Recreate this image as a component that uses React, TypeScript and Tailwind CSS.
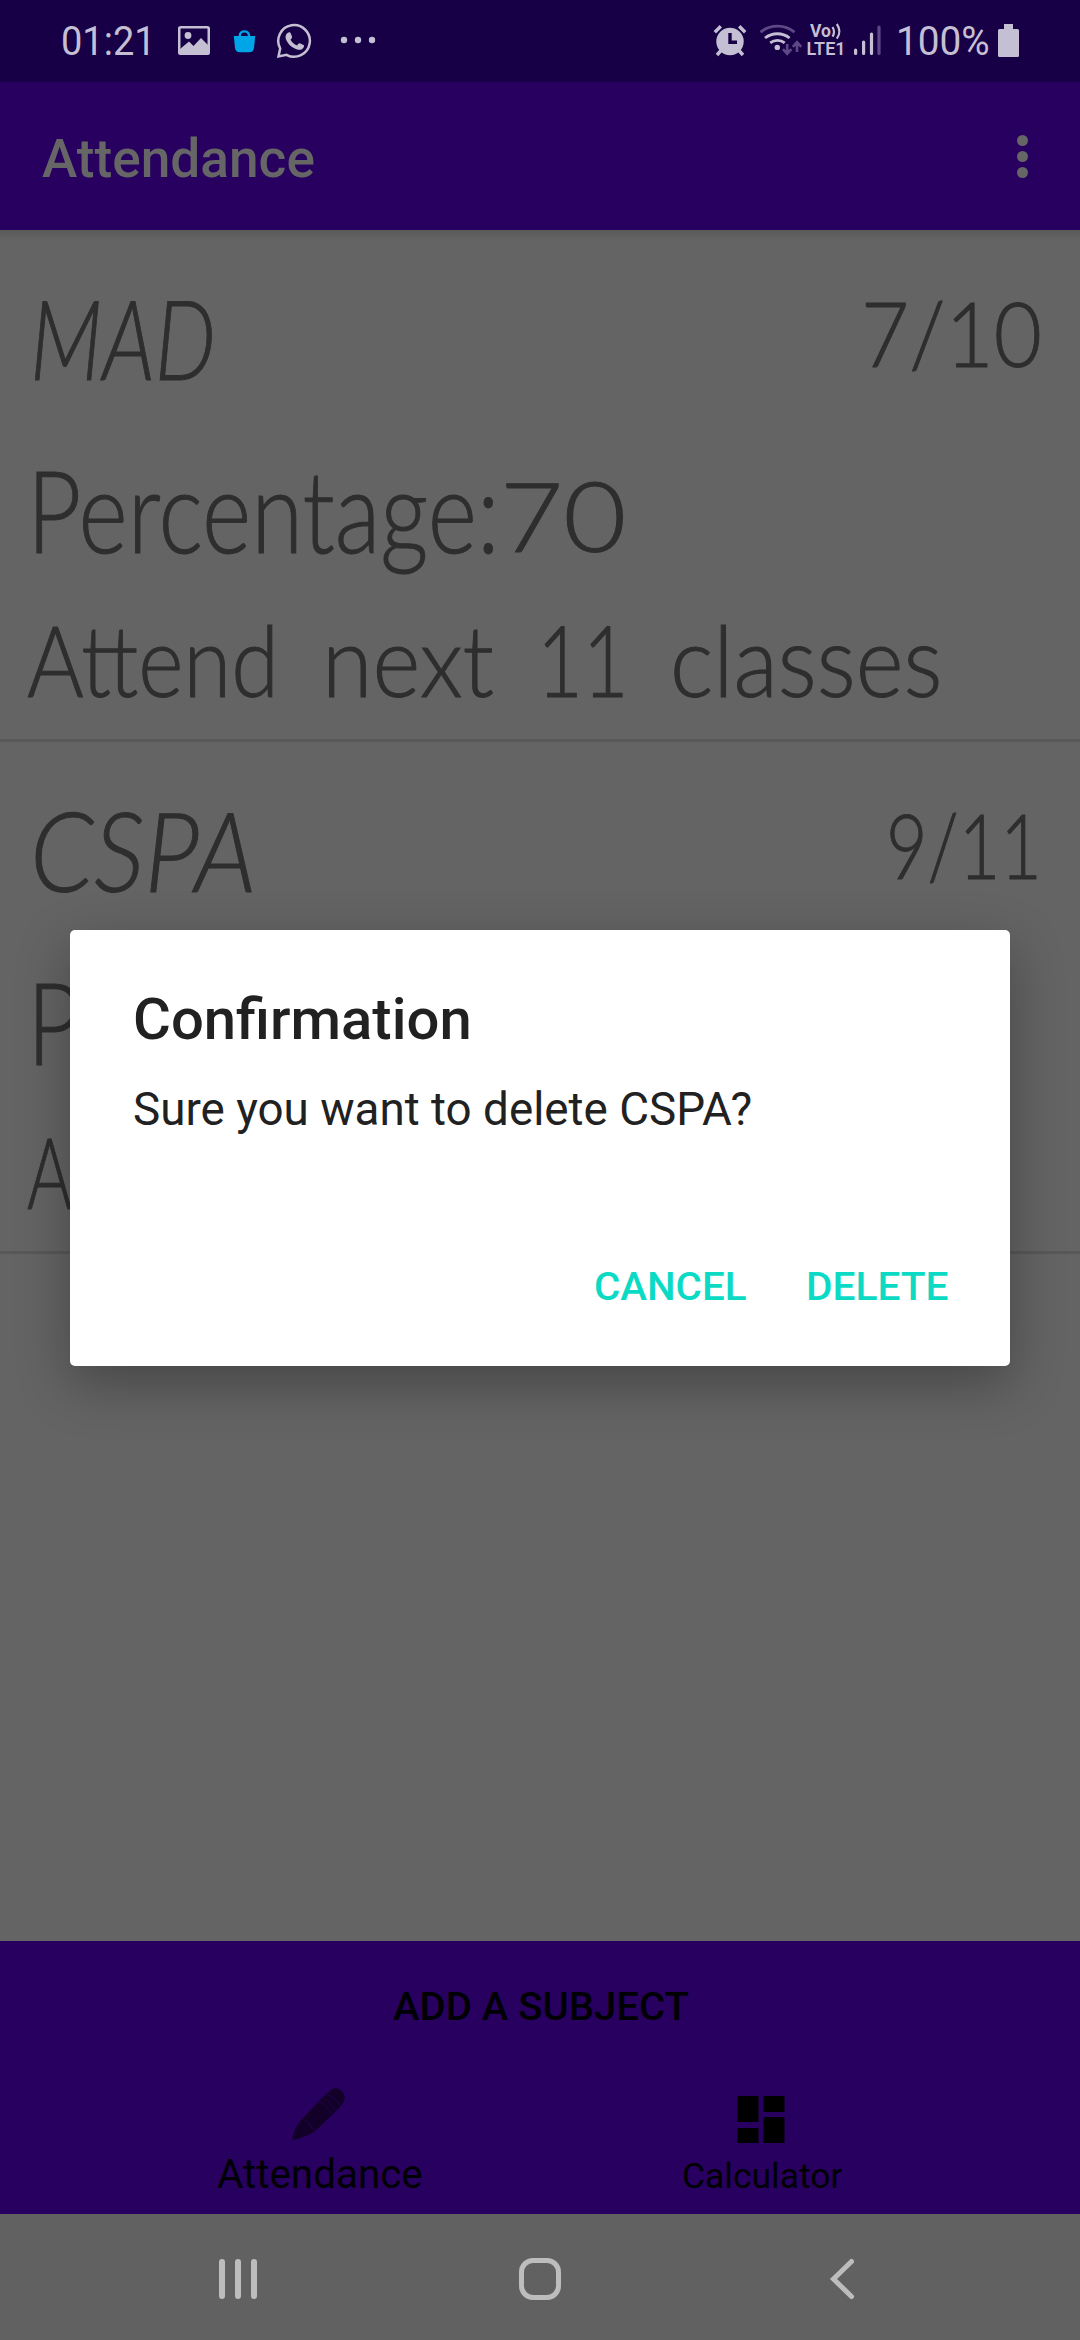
import { useLayoutEffect, useRef, useState } from "react";
import type { ReactNode } from "react";

/* Text stretched horizontally so that it fills an exact width. */
function Fit({ width, className = "", children }: { width: number; className?: string; children: ReactNode }) {
  const ref = useRef<HTMLSpanElement>(null);
  const [scale, setScale] = useState(1);
  useLayoutEffect(() => {
    if (ref.current) setScale(width / ref.current.offsetWidth);
  }, [width]);
  return (
    <span className="block shrink-0 whitespace-nowrap" style={{ width }}>
      <span ref={ref} className={`inline-block origin-left ${className}`} style={{ transform: `scaleX(${scale})` }}>
        {children}
      </span>
    </span>
  );
}

/* A status bar glyph, drawn in the bar's own coordinates. */
function Glyph({ x, w, className = "", children }: { x: number; w: number; className?: string; children: ReactNode }) {
  return (
    <svg width={w} height={82} viewBox={`${x} 0 ${w} 82`} className={`shrink-0 ${className}`} fill="none">
      {children}
    </svg>
  );
}

const C = "#c5bfd3";
const D = "#5f4886";

function StatusBar() {
  return (
    <div className="flex h-[82px] items-center bg-[#170045] pl-[61px] text-[#c5bfd3]">
      <Fit width={95} className="pt-[2px] text-[40px] leading-[82px]">01:21</Fit>
      <Glyph x={178} w={32} className="ml-[22px]">
        <rect x="179.2" y="27.2" width="29.6" height="26.6" rx="1.5" stroke={C} strokeWidth="2.6" />
        <circle cx="188" cy="35.5" r="3.4" fill={C} />
        <path d="M180 49 189 41.500 193.500 46 201 38 208 45V54H180Z" fill={C} />
      </Glyph>
      <Glyph x={233} w={23} className="ml-[23px]">
        <path d="M239.800 36.500v-1c0-5.500 9.200-5.500 9.200 0v1" stroke="#00a5e8" strokeWidth="2.4" />
        <path d="M233.800 36h21.400l-1.200 12c-.5 3-2 4.300-4.800 4.300h-9.400c-2.800 0-4.300-1.300-4.800-4.300Z" fill="#00a5e8" />
      </Glyph>
      <Glyph x={276} w={36} className="ml-[20px]">
        <path d="M278.500 56.500 280.200 48.500A15.800 15.800 0 1 1 286.500 54.800Z" stroke={C} strokeWidth="2.5" strokeLinejoin="miter" />
        <path d="M287.500 33c1.600-1.300 2.800-.8 3.300.5l1.200 3c.3 1-.2 1.700-1.500 3.200 1.700 3 3.700 4.700 6.500 5.700 1.500-1.800 2.100-2.600 3.300-2l3.200 1.600c.8.500.7 1 .2 2.300-.8 2-3.500 3-5.700 2.400-5.800-1.600-10.300-5.700-12.200-11-.7-2.300.2-4.400 1.700-5.700Z" fill={C} />
      </Glyph>
      <Glyph x={340} w={36} className="ml-[28px]">
        <circle cx="344" cy="40" r="3.200" fill={C} />
        <circle cx="358" cy="40" r="3.200" fill={C} />
        <circle cx="372" cy="40" r="3.200" fill={C} />
      </Glyph>
      <Glyph x={712} w={36} className="ml-auto">
        <circle cx="730" cy="41.500" r="13.700" fill={C} />
        <path d="m714.800 32.300 6-6M745.200 32.300l-6-6" stroke={C} strokeWidth="3.400" />
        <path d="m721.500 50-4.500 5M738.500 50l4.500 5" stroke={C} strokeWidth="3.400" />
        <path d="M730 33v9.300h7" stroke="#170045" strokeWidth="3.400" />
      </Glyph>
      <Glyph x={758} w={45} className="ml-[10px]">
        <path d="M760.500 32.200a27 27 0 0 1 34 0" stroke={D} strokeWidth="2.800" />
        <path d="M765 38a20 20 0 0 1 24.600 0" stroke={C} strokeWidth="2.800" />
        <path d="M770.200 42.800a12 12 0 0 1 14.500 0" stroke={C} strokeWidth="2.800" />
        <circle cx="777.300" cy="47.400" r="2.700" fill={C} />
        <path d="M787.200 44v9M783 49.200l4.200 4.600 4.200-4.600M797 52v-9M792.800 46.800l4.200-4.600 4.200 4.600" stroke={D} strokeWidth="2.600" />
      </Glyph>
      <Glyph x={806} w={40} className="ml-[3px]">
        <text x="810" y="37" textLength="21" lengthAdjust="spacingAndGlyphs" fontSize="18" fontWeight="700" fill={C}>Vo</text>
        <path d="M832.500 27q3 5 0 9.600M836.800 24q5.200 7.500 0 14.600" stroke={C} strokeWidth="2.200" />
        <text x="806.500" y="55" textLength="39" lengthAdjust="spacingAndGlyphs" fontSize="18.500" fontWeight="600" fill={C}>LTE1</text>
      </Glyph>
      <Glyph x={853} w={29} className="ml-[7px]">
        <g strokeWidth="3.200" strokeLinecap="round">
          <path d="M855.600 50v3.500M863.600 42v11.500M871.500 34v19.500" stroke={C} />
          <path d="M879 27v26.500" stroke={D} />
        </g>
      </Glyph>
      <div className="ml-[14px]">
        <Fit width={94} className="pt-[2px] text-[40px] leading-[82px]">100%</Fit>
      </div>
      <Glyph x={998} w={21} className="mr-[61px] ml-[8px]">
        <path d="M1004 24h9v5h4.500q1.500 0 1.500 1.500v25q0 1.500-1.500 1.500h-18q-1.500 0-1.500-1.500v-25q0-1.500 1.500-1.500h4.500Z" fill={C} />
      </Glyph>
    </div>
  );
}

function AppBar() {
  return (
    <div className="flex h-[148px] items-center justify-between bg-[#28005f] pr-[52px] pl-[42px] text-[#666]">
      <Fit width={273} className="mt-[6px] text-[53px] leading-[70px] font-medium">Attendance</Fit>
      <div className="flex flex-col gap-[5px]">
        <span className="size-[11px] rounded-full bg-[#666]" />
        <span className="size-[11px] rounded-full bg-[#666]" />
        <span className="size-[11px] rounded-full bg-[#666]" />
      </div>
    </div>
  );
}

type Word = { text: string; width: number; gap?: number };

type Subject = { name: Word; score: Word; percent: Word; advice: Word[] };

const subjects: Subject[] = [
  {
    name: { text: "MAD", width: 186 },
    score: { text: "7/10", width: 181 },
    percent: { text: "70", width: 126 },
    advice: [
      { text: "Attend", width: 252 },
      { text: "next", width: 172, gap: 43 },
      { text: "11", width: 92, gap: 43 },
      { text: "classes", width: 272, gap: 41 },
    ],
  },
  {
    name: { text: "CSPA", width: 226 },
    score: { text: "9/11", width: 156 },
    percent: { text: "81", width: 126 },
    advice: [{ text: "A", width: 45 }],
  },
];

function SubjectRow({ s }: { s: Subject }) {
  return (
    <div className="h-[512px] border-b-[3px] border-[#585858] pt-[52px] pr-[38px] pl-[27px] font-['Lato',sans-serif] font-light text-[#2e2e2e] [-webkit-text-stroke:1px_#2e2e2e]">
      <div className="flex h-[110px] items-start justify-between pl-[3px]">
        <Fit width={s.name.width} className="text-[111px] leading-[110px] italic">{s.name.text}</Fit>
        <Fit width={s.score.width} className="text-[91px] leading-[100px]">{s.score.text}</Fit>
      </div>
      <div className="mt-[61px] flex h-[124px]">
        <Fit width={473} className="text-[115px] leading-[110px]">Percentage:</Fit>
        <Fit width={s.percent.width} className="pt-[7px] text-[96px] leading-[110px]">{s.percent.text}</Fit>
      </div>
      <div className="mt-[32px] flex">
        {s.advice.map((w) => (
          <div key={w.text} style={{ marginLeft: w.gap ?? 0 }}>
            <Fit width={w.width} className="text-[98px] leading-[100px]">{w.text}</Fit>
          </div>
        ))}
      </div>
    </div>
  );
}

function BottomBar() {
  return (
    <div className="flex h-[273px] flex-col bg-[#28005f] text-[#000004]">
      <div className="flex justify-center pt-[39px] pl-[2px]">
        <Fit width={296} className="text-[39.500px] leading-[54px] font-medium">ADD A SUBJECT</Fit>
      </div>
      <div className="flex pt-[49px]">
        <div className="ml-[217px] flex w-[206px] flex-col items-center">
          <svg width="60" height="64" viewBox="290 2083 60 64">
            <path d="M292.500 2140q0-4 2-9.500 3-7 7-11L322 2098l9.500-8.500q5-3 9.500 1 4.500 4 3.500 9-1 4-4 7l-10 10-14 13.500q-7 5-12 6.500-7 3-12 3.500Z" fill="#120029" />
            <path d="M305 2120q6 3 8 10M319 2101.500q9 4 12 12M323 2098q9 4 12 12M327 2094.500q10 4 13 12" stroke="#28005f" strokeWidth=".7" fill="none" />
          </svg>
          <Fit width={206} className="pt-px text-[40px] leading-[54px]">Attendance</Fit>
        </div>
        <div className="ml-[258px] flex w-[161px] flex-col items-center">
          <svg width="62" height="64" viewBox="730.500 2083 62 64" fill="#000">
            <path d="M737 2096h21v26h-21ZM763 2096h21v16h-21ZM737 2128h21v15h-21ZM763 2117h21v26h-21Z" />
          </svg>
          <Fit width={160} className="pt-px text-[35px] leading-[58px]">Calculator</Fit>
        </div>
      </div>
    </div>
  );
}

function NavBar() {
  return (
    <div className="flex h-[126px] items-center bg-[#616161] pt-[4px] pl-[218px] text-[#bdbdbd]">
      <div className="flex gap-[10px] pl-px">
        <span className="h-[40px] w-[6px] rounded-full bg-[#bdbdbd]" />
        <span className="h-[40px] w-[6px] rounded-full bg-[#bdbdbd]" />
        <span className="h-[40px] w-[6px] rounded-full bg-[#bdbdbd]" />
      </div>
      <div className="ml-[262px] size-[42px] rounded-[14px] border-[5px] border-[#bdbdbd]" />
      <svg className="ml-[268px]" width="28" height="44" viewBox="0 0 28 44" fill="none">
        <path d="M22.500 4.500 4.500 22l18 17.500" stroke="#bdbdbd" strokeWidth="5" strokeLinecap="round" />
      </svg>
    </div>
  );
}

function ConfirmDialog() {
  return (
    <div className="absolute top-[930px] left-[70px] flex h-[436px] w-[940px] flex-col rounded-[5px] bg-white pl-[63px] text-[#212121] shadow-[0_18px_54px_rgba(0,0,0,0.3)]">
      <div className="pt-[55px]">
        <Fit width={339} className="text-[57px] leading-[70px] font-medium">Confirmation</Fit>
      </div>
      <div className="pt-[24px]">
        <Fit width={619} className="text-[46px] leading-[60px]">Sure you want to delete CSPA?</Fit>
      </div>
      <div className="mt-auto flex justify-end gap-[60px] pr-[61px] pb-[52px] text-[39.500px] leading-[54px] font-medium text-[#0bdac5]">
        <Fit width={152}>CANCEL</Fit>
        <Fit width={143}>DELETE</Fit>
      </div>
    </div>
  );
}

export default function App() {
  return (
    <div className="relative flex h-[2340px] w-[1080px] flex-col overflow-hidden bg-[#646464] font-['Roboto',sans-serif]">
      <StatusBar />
      <AppBar />
      <div className="flex-1 bg-[linear-gradient(to_bottom,#5a5a5a,#646464_10px)]">
        {subjects.map((s) => (
          <SubjectRow key={s.name.text} s={s} />
        ))}
      </div>
      <BottomBar />
      <NavBar />
      <ConfirmDialog />
    </div>
  );
}
